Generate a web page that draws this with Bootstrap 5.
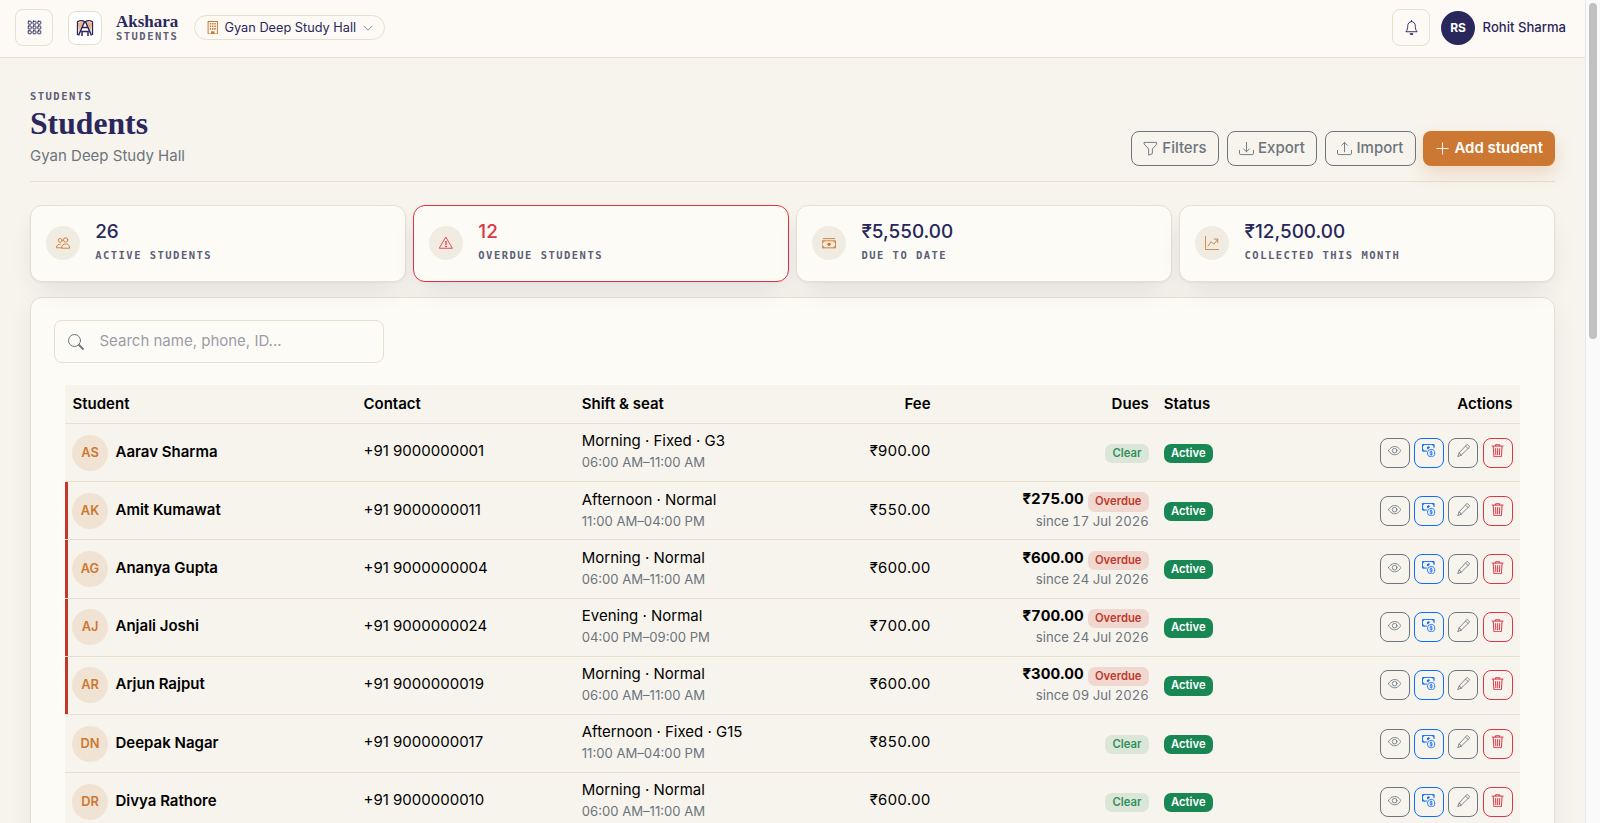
<!DOCTYPE html>
<html lang="en">
<head>
<meta charset="utf-8">
<meta name="viewport" content="width=device-width, initial-scale=1">
<title>Students · Akshara</title>
<link rel="stylesheet" href="https://cdn.jsdelivr.net/npm/bootstrap@5.3.0/dist/css/bootstrap.min.css">
<style>
:root{--ink:#29275b;--line:#e6dfce;--paper:#f7f4ed;--card:#fcfbf6;--accent:#cc7832;--slate:#5d5f78}
html{font-size:15px}
html,body{height:100%;overflow:hidden}
body{font-family:Inter,"Noto Sans",sans-serif;font-size:15px;background:var(--paper);color:#000}
.ic{width:1em;height:1em;display:inline-block;fill:none;stroke:currentColor;stroke-width:1;stroke-linecap:round;stroke-linejoin:round;vertical-align:-.125em;flex:none}
.topbar{height:58px;background:#fdfaf5;border-bottom:1px solid var(--line);padding:0 34px 2px 15px}
.tool-btn{width:38px;height:37px;border:1px solid var(--line);border-radius:8px;color:var(--ink)}
.logo-box{width:34px;height:34px;border:1px solid var(--line);border-radius:8px;background:#fff;margin-left:15px}
.brand{margin-left:14px;width:63px;color:var(--ink)}
.brand-name{font:700 17px/16px "Liberation Serif",serif}
.eyebrow{font:700 10.5px/12px "DejaVu Sans Mono",monospace;letter-spacing:1.47px;color:var(--slate);text-transform:uppercase;white-space:nowrap}
.branch{height:25px;width:191px;border:1px solid var(--line);margin-left:15px;padding:0 11px;font-size:12.75px;color:var(--ink)}
.avatar{width:34px;height:34px;background:var(--ink);color:#fff;font-size:12px;font-weight:700;margin-left:11px}
.who{font-size:13.1px;font-weight:500;color:var(--ink)}
.page{padding:32px 45px 0 30px}
.page-head{border-bottom:1px solid var(--line);height:92px}
h1{font:600 31.7px/36px "Liberation Serif",serif;color:var(--ink);margin:4px 0 0}
.act{height:35px;font-size:15px;font-weight:500;border-radius:8px;padding:0 11.500px;display:inline-flex;align-items:center;gap:4px;white-space:nowrap}
.act-main{background:var(--accent);color:#fff;font-weight:600;border:0;padding:0 12px;box-shadow:0 8px 18px rgba(204,120,50,.22)}
.stat{height:77px;border:1px solid var(--line);border-radius:12px;background:var(--card);padding:0 15px;gap:15.200px;box-shadow:0 1px 2px rgba(41,39,91,.05),0 12px 28px -8px rgba(41,39,91,.12)}
.stat-ico{width:34px;height:34px;background:#f1ece1;color:var(--accent);font-size:14px;margin-top:-1px}
.stat-text{padding-bottom:6px}
.stat-val{font-size:18.9px;line-height:24px;font-weight:500;color:var(--ink);margin-bottom:5px}
.stat.late{border-color:#dc3545}
.late .stat-ico,.late .stat-val{color:#dc3545}
.panel{height:700px;margin-top:15px;border:1px solid var(--line);border-radius:12px;background:var(--card);padding:22px 34px 0 34px;box-shadow:0 8px 28px rgba(41,39,91,.06)}
.search{width:330px;height:43px;border:1px solid var(--line);border-radius:8px;margin-left:-11px;padding-left:13px;gap:15.500px}
.search .ic{font-size:16px;color:#6c757d}
.search input{border:0;background:none;outline:0;font-size:15px;padding:0}
.search input::placeholder{color:#9d9ca8}
.students{table-layout:fixed;margin:22px 0 0;font-size:15px;--bs-table-bg:var(--paper);--bs-table-color:#000;border-color:var(--line)}
.students>:not(caption)>*>*{padding:0 7.5px;border-bottom-width:1px;vertical-align:middle}
.students th{height:38.5px;font-weight:600}
.students td{height:58.2px;line-height:22px}
.students .overdue>td:first-child{box-shadow:inset 3px 0 0 #c0392b}
.nums{font-variant-numeric:tabular-nums}
.face{width:36px;height:36px;background:#f1e3d3;color:var(--accent);font-size:12.8px;font-weight:600}
.who-cell{margin-left:-.5px}
.who-cell .fw-semibold{padding-bottom:2px}
.sub{font-size:13.125px;line-height:20px;color:#6c757d}
.lift{padding-bottom:2.500px}
.due-line{line-height:21px}
.due-line+.sub{line-height:19px}
.chip{display:inline-block;font-size:11.25px;line-height:11.25px;padding:4px 7.3px;border-radius:7px;font-weight:600;vertical-align:-1px}
.chip-clear{background:#dbe6d9;color:#2e9158}
.chip-over{background:#f0d8d0;color:#c0392b}
.chip-on{background:#198754;color:#fff}
.row-btn{width:30px;height:30px;border-radius:8px;padding:0 0 3px;font-size:13.3px;display:inline-flex;align-items:center;justify-content:center}
.scroller{position:fixed;right:0;top:0;bottom:0;width:15px;background:#fafafa;border-left:1px solid #e8e8e8;z-index:5}
.scroller i{display:block;width:8px;height:336px;margin:3px 0 0 3px;border-radius:4px;background:#c1c1c1}
</style>
</head>
<body>
<svg class="d-none" aria-hidden="true">
<symbol id="grid" viewBox="0 0 16 16"><g stroke-width="1"><rect x="1.300" y="1.300" width="3.200" height="3.200" rx=".6"/><rect x="6.400" y="1.300" width="3.200" height="3.200" rx=".6"/><rect x="11.500" y="1.300" width="3.200" height="3.200" rx=".6"/><rect x="1.300" y="6.400" width="3.200" height="3.200" rx=".6"/><rect x="6.400" y="6.400" width="3.200" height="3.200" rx=".6"/><rect x="11.500" y="6.400" width="3.200" height="3.200" rx=".6"/><rect x="1.300" y="11.500" width="3.200" height="3.200" rx=".6"/><rect x="6.400" y="11.500" width="3.200" height="3.200" rx=".6"/><rect x="11.500" y="11.500" width="3.200" height="3.200" rx=".6"/></g></symbol>
<symbol id="building" viewBox="0 0 16 16"><path stroke-width="1.200" d="M2.500.6h11v14.800h-11z"/><path fill="currentColor" stroke="none" d="M6 12h4v3.500H6z"/><path stroke-width="1.900" stroke-dasharray="1.700 1" stroke-linecap="butt" d="M4.500 3.300h8M4.500 6.300h8M4.500 9.300h8"/></symbol>
<symbol id="chev" viewBox="0 0 16 16"><path stroke-width="1.300" d="M1.500 5l6.500 6.500L14.500 5"/></symbol>
<symbol id="bell" viewBox="0 0 16 16"><path d="M8 1.500C5.500 2 4 3.900 4 6c0 3-.6 5-2 6.500h12C12.600 11 12 9 12 6c0-2.100-1.500-4-4-4.500zM8 .6v.9"/><path fill="currentColor" stroke="none" d="M8 16a2 2 0 0 0 2-2H6a2 2 0 0 0 2 2"/></symbol>
<symbol id="funnel" viewBox="0 0 16 16"><path d="M1.500 1.500h13v2L10 8.500v5l-4 1.500V8.500L1.500 3.500z"/></symbol>
<symbol id="down" viewBox="0 0 16 16"><path d="M.5 10v3a1.500 1.500 0 0 0 1.500 1.500h12a1.500 1.500 0 0 0 1.500-1.500v-3M8 1.500v10M5 8.500l3 3 3-3"/></symbol>
<symbol id="up" viewBox="0 0 16 16"><path d="M.5 10v3a1.500 1.500 0 0 0 1.500 1.500h12a1.500 1.500 0 0 0 1.500-1.500v-3M8 11.500v-10M5 4.500l3-3 3 3"/></symbol>
<symbol id="plus" viewBox="0 0 16 16"><path d="M8 2v12M2 8h12"/></symbol>
<symbol id="people" viewBox="0 0 16 16"><circle cx="4.800" cy="5" r="2.200"/><circle cx="11" cy="4.500" r="2.500"/><path d="M6.500 13.500c0-3 2-4.500 4.500-4.500s4.500 1.500 4.500 4.500zM6.500 13.500h-6C.5 10.500 2.500 9.300 5 9.300"/></symbol>
<symbol id="warn" viewBox="0 0 16 16"><path d="M8 1.600L15.300 14H.7z"/><path stroke-width="1.400" d="M8 6v4"/><circle cx="8" cy="12" r=".5" fill="currentColor"/></symbol>
<symbol id="cash" viewBox="0 0 16 16"><path d="M1.500 3h13M.5 5.500h15v8H.5zM.5 7.500a2 2 0 0 0 2-2M15.500 7.500a2 2 0 0 1-2-2M.5 11.500a2 2 0 0 1 2 2M15.500 11.500a2 2 0 0 0-2 2"/><circle cx="8" cy="9.500" r="1.500" fill="currentColor"/></symbol>
<symbol id="graph" viewBox="0 0 16 16"><path d="M.5.5v15h15M3.500 11.500l3.500-5 3 3 4.500-5.500M10.500 3.500h4v4"/></symbol>
<symbol id="search" viewBox="0 0 16 16"><circle cx="6.500" cy="6.500" r="6"/><path stroke-width="1.800" d="M11 11l4 4"/></symbol>
<symbol id="eye" viewBox="0 0 16 16"><path d="M.6 8S3.200 3 8 3s7.400 5 7.400 5-2.600 5-7.400 5S.6 8 .6 8z"/><circle cx="8" cy="8" r="2.800"/></symbol>
<symbol id="pay" viewBox="0 0 16 16"><path stroke-width="1.200" d="M5.500 8.500h-5v-8h14v4M.5 2.500a2 2 0 0 0 2-2M14.500 2.500a2 2 0 0 1-2-2M.5 6.500a2 2 0 0 1 2 2"/><path fill="currentColor" stroke="none" d="M5.800 5a2 2 0 0 1 3.800-1L7 6.500z"/><circle cx="11" cy="11" r="4.500"/><path stroke-width=".9" d="M12.500 9.600c-.8-.9-2.900-.7-2.900.4 0 1.300 3 .7 3 2 0 1.200-2.300 1.300-3.100.3M11 8.300v5.400"/></symbol>
<symbol id="pencil" viewBox="0 0 16 16"><path d="M12.500.7l2.800 2.800L5 13.500.8 15.200 2.500 11zM10.500 2.700l2.800 2.800M2.500 11l1.200.3v1l1 .3.300.9"/></symbol>
<symbol id="trash" viewBox="0 0 16 16"><path stroke-width="1.200" d="M1.500 2.500h13M5.500 2.300V.9h5v1.400M2.700 3l.8 12.300h9L13.300 3M5.500 5.500l.3 7.500M8 5.500V13M10.500 5.500l-.3 7.500"/></symbol>
</svg>

<header class="topbar d-flex align-items-center">
  <div class="tool-btn d-flex align-items-center justify-content-center"><svg class="ic" style="font-size:15px"><use href="#grid"/></svg></div>
  <div class="logo-box d-flex align-items-center justify-content-center">
    <svg width="18" height="18" viewBox="0 0 18 18" fill="none" stroke="#29275b"><path fill="#f1b27c" stroke="none" d="M2 4l6-2-4.500 10zM16 4l-6-2 4.500 10z"/><path stroke-width="1.300" d="M1.500 16V2.800c2.500-1.500 5-1.500 7.500 0 2.500-1.500 5-1.500 7.500 0V16"/><path stroke-width="1.500" d="M2.500 16.500L8.400 3h1.200l5.900 13.500M6.500 8.500h5M6 17v-4.500h6V17"/></svg>
  </div>
  <div class="brand"><div class="brand-name">Akshara</div><div class="eyebrow">Students</div></div>
  <div class="branch rounded-pill d-flex align-items-center"><svg class="ic" style="font-size:13.5px;color:var(--accent);margin-right:5px"><use href="#building"/></svg><span class="text-nowrap">Gyan Deep Study Hall</span><svg class="ic ms-auto" style="font-size:10px;color:#777891"><use href="#chev"/></svg></div>
  <div class="tool-btn d-flex align-items-center justify-content-center ms-auto"><svg class="ic" style="font-size:15px"><use href="#bell"/></svg></div>
  <div class="avatar rounded-circle d-flex align-items-center justify-content-center">RS</div>
  <div class="who ms-2 text-nowrap">Rohit Sharma</div>
</header>

<main class="page">
  <div class="page-head d-flex justify-content-between">
    <div><div class="eyebrow">Students</div><h1>Students</h1><div class="text-secondary" style="line-height:27px">Gyan Deep Study Hall</div></div>
    <div class="d-flex align-items-end gap-2" style="padding-bottom:15px">
      <button class="btn btn-outline-secondary act"><svg class="ic"><use href="#funnel"/></svg>Filters</button>
      <button class="btn btn-outline-secondary act"><svg class="ic"><use href="#down"/></svg>Export</button>
      <button class="btn btn-outline-secondary act"><svg class="ic"><use href="#up"/></svg>Import</button>
      <button class="btn act act-main"><svg class="ic"><use href="#plus"/></svg>Add student</button>
    </div>
  </div>

  <div class="row row-cols-4 gx-2" style="margin-top:23px">
    <div class="col"><div class="stat d-flex align-items-center"><div class="stat-ico rounded-circle d-flex align-items-center justify-content-center"><svg class="ic"><use href="#people"/></svg></div><div class="stat-text"><div class="stat-val">26</div><div class="eyebrow">Active students</div></div></div></div>
    <div class="col"><div class="stat late d-flex align-items-center"><div class="stat-ico rounded-circle d-flex align-items-center justify-content-center"><svg class="ic"><use href="#warn"/></svg></div><div class="stat-text"><div class="stat-val">12</div><div class="eyebrow">Overdue students</div></div></div></div>
    <div class="col"><div class="stat d-flex align-items-center"><div class="stat-ico rounded-circle d-flex align-items-center justify-content-center"><svg class="ic"><use href="#cash"/></svg></div><div class="stat-text"><div class="stat-val">₹5,550.00</div><div class="eyebrow">Due to date</div></div></div></div>
    <div class="col"><div class="stat d-flex align-items-center"><div class="stat-ico rounded-circle d-flex align-items-center justify-content-center"><svg class="ic"><use href="#graph"/></svg></div><div class="stat-text"><div class="stat-val">₹12,500.00</div><div class="eyebrow">Collected this month</div></div></div></div>
  </div>

  <section class="panel">
    <label class="search d-flex align-items-center"><svg class="ic"><use href="#search"/></svg><input class="flex-grow-1" placeholder="Search name, phone, ID..."></label>
    <table class="table students">
      <colgroup><col style="width:20%"><col style="width:15%"><col style="width:15%"><col style="width:10%"><col style="width:15%"><col style="width:10%"><col style="width:15%"></colgroup>
      <thead><tr><th>Student</th><th>Contact</th><th>Shift &amp; seat</th><th class="text-end">Fee</th><th class="text-end">Dues</th><th>Status</th><th class="text-end">Actions</th></tr></thead>
      <tbody id="rows"></tbody>
    </table>
  </section>
</main>
<div class="scroller"><i></i></div>

<script src="https://cdn.jsdelivr.net/npm/bootstrap@5.3.0/dist/js/bootstrap.bundle.min.js"></script>
<script>
const students = [
  ['AS','Aarav Sharma','01','Morning · Fixed · G3','06:00 AM–11:00 AM','900'],
  ['AK','Amit Kumawat','11','Afternoon · Normal','11:00 AM–04:00 PM','550','275','17 Jul 2026'],
  ['AG','Ananya Gupta','04','Morning · Normal','06:00 AM–11:00 AM','600','600','24 Jul 2026'],
  ['AJ','Anjali Joshi','24','Evening · Normal','04:00 PM–09:00 PM','700','700','24 Jul 2026'],
  ['AR','Arjun Rajput','19','Morning · Normal','06:00 AM–11:00 AM','600','300','09 Jul 2026'],
  ['DN','Deepak Nagar','17','Afternoon · Fixed · G15','11:00 AM–04:00 PM','850'],
  ['DR','Divya Rathore','10','Morning · Normal','06:00 AM–11:00 AM','600']
];
const btn = (kind, icon) => `<button class="btn btn-outline-${kind} row-btn"><svg class="ic"><use href="#${icon}"/></svg></button>`;
document.getElementById('rows').innerHTML = students.map(([ini, name, tel, shift, time, fee, due, since]) => `
<tr class="${due ? 'overdue' : ''}">
<td><div class="who-cell d-flex align-items-center gap-2"><span class="face rounded-circle d-flex align-items-center justify-content-center">${ini}</span><span class="fw-semibold">${name}</span></div></td>
<td><div class="lift">+91 90000000${tel}</div></td>
<td><div class="lift"><div>${shift}</div><div class="sub">${time}</div></div></td>
<td class="text-end nums"><div class="lift">₹${fee}.00</div></td>
<td class="text-end nums">${due ? `<div class="lift"><div class="due-line"><span class="fw-bold">₹${due}.00</span> <span class="chip chip-over">Overdue</span></div><div class="sub">since ${since}</div></div>` : '<div class="lift"><span class="chip chip-clear">Clear</span></div>'}</td>
<td><div class="lift"><span class="chip chip-on">Active</span></div></td>
<td><div class="d-flex justify-content-end" style="gap:4.200px">${btn('secondary','eye')}${btn('primary','pay')}${btn('secondary','pencil')}${btn('danger','trash')}</div></td>
</tr>`).join('');
</script>
</body>
</html>
